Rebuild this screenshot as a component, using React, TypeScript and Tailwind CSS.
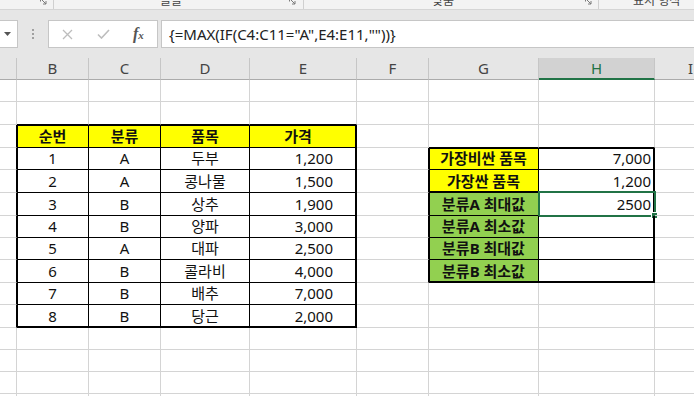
import clsx from "clsx";

const cols = [
  { id: "A", w: "w-[17px]" },
  { id: "B", w: "w-[72px]" },
  { id: "C", w: "w-[72px]" },
  { id: "D", w: "w-[89px]" },
  { id: "E", w: "w-[107px]" },
  { id: "F", w: "w-[72px]" },
  { id: "G", w: "w-[110px]" },
  { id: "H", w: "w-[116px]" },
  { id: "I", w: "w-[72px]" },
];

// sheet rows 1..15
const rowH = [
  "h-[22px]", "h-[23px]", "h-[23px]", "h-[22px]", "h-[23px]",
  "h-[23px]", "h-[22px]", "h-[22px]", "h-[23px]", "h-[22px]",
  "h-[23px]", "h-[22px]", "h-[22px]", "h-[22px]", "h-[22px]",
];

const items = [
  ["1", "A", "두부", "1,200"],
  ["2", "A", "콩나물", "1,500"],
  ["3", "B", "상추", "1,900"],
  ["4", "B", "양파", "3,000"],
  ["5", "A", "대파", "2,500"],
  ["6", "B", "콜라비", "4,000"],
  ["7", "B", "배추", "7,000"],
  ["8", "B", "당근", "2,000"],
];

const summary = [
  ["가장비싼 품목", "7,000"],
  ["가장싼 품목", "1,200"],
  ["분류A 최대값", "2500"],
  ["분류A 최소값", ""],
  ["분류B 최대값", ""],
  ["분류B 최소값", ""],
];

// thick (medium) table edges, drawn as a 1px inset next to the black gridline
const thick: Record<string, string> = {
  t: "shadow-[inset_0_1px_0_#000]",
  b: "shadow-[inset_0_-1px_0_#000]",
  l: "shadow-[inset_1px_0_0_#000]",
  r: "shadow-[inset_-1px_0_0_#000]",
  tl: "shadow-[inset_1px_1px_0_#000]",
  tr: "shadow-[inset_-1px_1px_0_#000]",
  bl: "shadow-[inset_1px_-1px_0_#000]",
  br: "shadow-[inset_-1px_-1px_0_#000]",
};

function Cell({ r, c }: { r: number; c: number }) {
  const t1 = r >= 3 && r <= 11 && c >= 1 && c <= 4;
  const t2 = r >= 4 && r <= 9 && c >= 6 && c <= 7;
  const rightBlack = t1 || t2 || (c === 0 && r >= 3 && r <= 11) || (c === 5 && r >= 4 && r <= 9);
  const bottomBlack = t1 || t2 || (r === 2 && c >= 1 && c <= 4) || (r === 3 && c >= 6 && c <= 7);

  let key = "";
  if (t1) {
    if (r === 3) key += "t";
    if (r === 11) key += "b";
    if (c === 1) key += "l";
    if (c === 4) key += "r";
  }
  if (t2) {
    if (r === 4) key += "t";
    if (r === 5 || r === 9) key += "b";
    if (c === 6) key += "l";
    if (c === 7) key += "r";
  }

  let text = "";
  let look = "";
  if (t1 && r === 3) {
    text = ["순번", "분류", "품목", "가격"][c - 1];
    look = clsx("justify-center bg-[#ffff00] font-bold", c === 4 && "pr-[10px]");
  } else if (t1) {
    text = items[r - 4][c - 1];
    look = c === 4 ? "justify-end pr-[23px]" : "justify-center";
  } else if (t2 && c === 6) {
    text = summary[r - 4][0];
    look = clsx("justify-center font-bold", r <= 5 ? "bg-[#ffff00]" : "bg-[#92d050]");
  } else if (t2) {
    text = summary[r - 4][1];
    look = "justify-end pr-[3px]";
  }

  return (
    <div
      className={clsx(
        "relative flex shrink-0 items-center border-r border-b whitespace-nowrap",
        cols[c].w,
        rightBlack ? "border-r-black" : "border-r-[#d4d4d4]",
        bottomBlack ? "border-b-black" : "border-b-[#d4d4d4]",
        key && thick[key],
        look
      )}
    >
      {text}
      {r === 6 && c === 7 && (
        <div className="absolute -top-[2px] -right-[2px] -bottom-[2px] -left-[1px] border-2 border-[#217346]">
          <div className="absolute -right-[4px] -bottom-[4px] h-[7px] w-[7px] border border-white bg-[#217346]" />
        </div>
      )}
    </div>
  );
}

function Launcher() {
  return (
    <svg width="7" height="7" viewBox="0 0 7 7" fill="none" stroke="#7a7a7a" strokeWidth="1" className="-mt-[2px]">
      <path d="M0.5 3.5V0.5H3.5" />
      <path d="M2 2L6 6M6 3V6H3" />
    </svg>
  );
}

export default function App() {
  return (
    <div className="h-[396px] w-[694px] overflow-hidden bg-white font-['Noto_Sans','Noto_Sans_CJK_KR',sans-serif] text-[15px] leading-none text-[#111]">
      {/* ribbon bottom edge */}
      <div className="flex h-[10px] overflow-hidden border-b border-[#d5d5d5] bg-[#f3f3f3] text-[12px] text-[#444]">
        <div className="flex w-[54px] shrink-0 items-start justify-end border-r border-[#d0d0d0] pr-[6px]">
          <Launcher />
        </div>
        <div className="flex w-[250px] shrink-0 items-start border-r border-[#d0d0d0] pl-[106px] pr-[7px]">
          <span className="-mt-[5px]">글꼴</span>
          <span className="ml-auto">
            <Launcher />
          </span>
        </div>
        <div className="flex w-[295px] shrink-0 items-start border-r border-[#d0d0d0] pl-[128px] pr-[6px]">
          <span className="-mt-[5px]">맞춤</span>
          <span className="ml-auto">
            <Launcher />
          </span>
        </div>
        <div className="flex flex-1 items-start pl-[34px]">
          <span className="-mt-[5px] whitespace-nowrap">표시 형식</span>
        </div>
      </div>

      {/* formula bar */}
      <div className="bg-[#e6e6e6] py-[10px]">
        <div className="flex h-[28px]">
          <div className="flex w-[18px] shrink-0 items-center border border-l-0 border-[#c6c6c6] bg-white pl-[4px]">
            <svg width="7" height="4" viewBox="0 0 7 4">
              <path d="M0 0H7L3.5 4Z" fill="#555" />
            </svg>
          </div>
          <div className="flex w-[30px] shrink-0 flex-col items-center justify-center gap-[2px]">
            <div className="h-[2px] w-[2px] bg-[#a0a0a0]" />
            <div className="h-[2px] w-[2px] bg-[#a0a0a0]" />
            <div className="h-[2px] w-[2px] bg-[#a0a0a0]" />
          </div>
          <div className="flex w-[110px] shrink-0 items-center border border-[#c6c6c6] bg-white pl-[13px]">
            <svg width="11" height="11" viewBox="0 0 11 11" stroke="#bdbdbd" strokeWidth="1.3">
              <path d="M1 1L10 10M10 1L1 10" />
            </svg>
            <svg width="13" height="10" viewBox="0 0 13 10" fill="none" stroke="#bdbdbd" strokeWidth="1.6" className="ml-[24px]">
              <path d="M1 5.5L4.5 9L12 1" />
            </svg>
            <span className="ml-[23px] font-['Liberation_Serif',serif] text-[16px] font-bold italic text-[#555]">
              f<span className="text-[11px]">x</span>
            </span>
          </div>
          <div className="ml-[3px] flex flex-1 items-center border border-r-0 border-[#c6c6c6] bg-white pl-[7px] whitespace-nowrap text-[#222]">
            {'{=MAX(IF(C4:C11="A",E4:E11,""))}'}
          </div>
        </div>
      </div>

      {/* column headers */}
      <div className="flex h-[22px] bg-[#e6e6e6]">
        {cols.map((col) => (
          <div
            key={col.id}
            className={clsx(
              "flex shrink-0 items-center justify-center border-r border-r-[#c6c6c6]",
              col.w,
              col.id === "H"
                ? "border-b-2 border-b-[#217346] bg-[#d2d2d2] text-[#217346]"
                : "border-b border-b-[#ababab] text-[#444]"
            )}
          >
            {col.id === "A" ? "" : col.id}
          </div>
        ))}
      </div>

      {/* cells */}
      {rowH.map((h, i) => (
        <div key={i} className={clsx("flex", h)}>
          {cols.map((col, c) => (
            <Cell key={col.id} r={i + 1} c={c} />
          ))}
        </div>
      ))}
    </div>
  );
}
